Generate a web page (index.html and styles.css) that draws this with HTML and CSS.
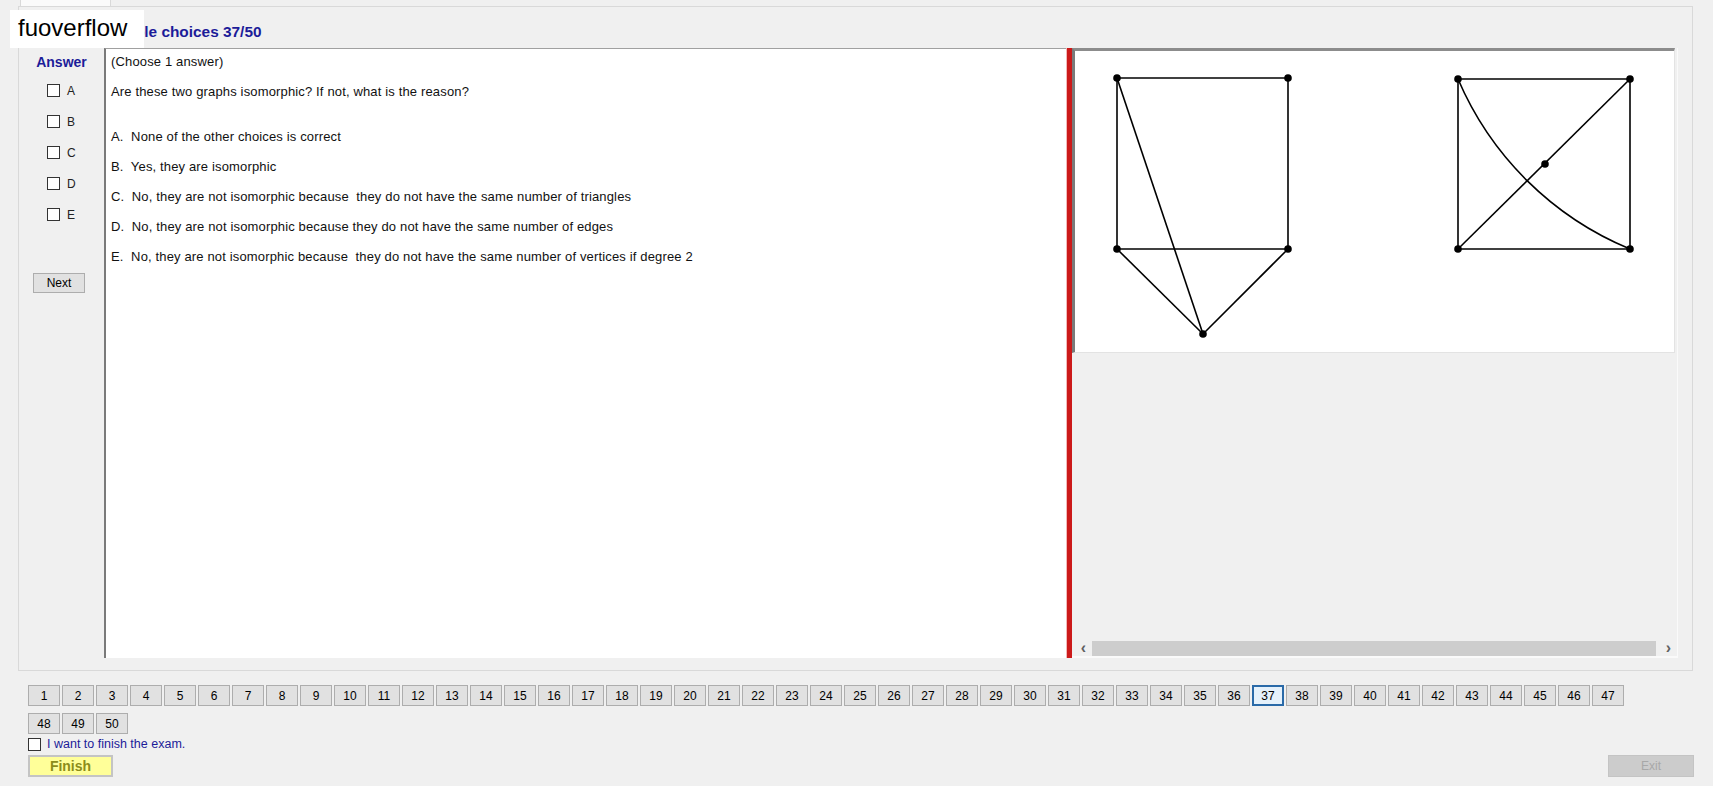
FILE: index.html
```html
<!DOCTYPE html>
<html lang="en">
<head>
    <meta charset="UTF-8">
    <title>Exam</title>
    <link rel="stylesheet" href="styles.css">
</head>
<body>
    <div class="tabs">
        <div class="tab">Question</div>
    </div>
    <div class="tabpage">
        <div class="title">Multiple choices 37/50</div>
        <div class="main">
            <div class="answers">
                <div class="answer-label">Answer</div>
                <label class="opt"><span class="box"></span>A</label>
                <label class="opt"><span class="box"></span>B</label>
                <label class="opt"><span class="box"></span>C</label>
                <label class="opt"><span class="box"></span>D</label>
                <label class="opt"><span class="box"></span>E</label>
                <button class="next">Next</button>
            </div>
            <div class="question">
                <p>(Choose 1 answer)</p>
                <p class="stem">Are these two graphs isomorphic? If not, what is the reason?</p>
                <p>A.&nbsp; None of the other choices is correct</p>
                <p>B.&nbsp; Yes, they are isomorphic</p>
                <p>C.&nbsp; No, they are not isomorphic because&nbsp; they do not have the same number of triangles</p>
                <p>D.&nbsp; No, they are not isomorphic because they do not have the same number of edges</p>
                <p>E.&nbsp; No, they are not isomorphic because&nbsp; they do not have the same number of vertices if degree 2</p>
            </div>
            <div class="splitter"></div>
            <div class="figure-pane">
                <div class="figure">
                    <svg width="599" height="301" viewBox="0 0 599 301">
                        <g stroke="#000" stroke-width="1.6" fill="none">
                            <line x1="42" y1="27" x2="213" y2="27"/>
                            <line x1="213" y1="27" x2="213" y2="198"/>
                            <line x1="42" y1="27" x2="42" y2="198"/>
                            <line x1="42" y1="198" x2="213" y2="198"/>
                            <line x1="42" y1="27" x2="128" y2="283"/>
                            <line x1="42" y1="198" x2="128" y2="283"/>
                            <line x1="213" y1="198" x2="128" y2="283"/>

                            <line x1="383" y1="28" x2="555" y2="28"/>
                            <line x1="555" y1="28" x2="555" y2="198"/>
                            <line x1="383" y1="28" x2="383" y2="198"/>
                            <line x1="383" y1="198" x2="555" y2="198"/>
                            <line x1="383" y1="198" x2="555" y2="28"/>
                            <path d="M383 28 A320 320 0 0 0 555 198"/>
                        </g>
                        <g fill="#000">
                            <circle cx="42" cy="27" r="3.8"/>
                            <circle cx="213" cy="27" r="3.8"/>
                            <circle cx="42" cy="198" r="3.8"/>
                            <circle cx="213" cy="198" r="3.8"/>
                            <circle cx="128" cy="283" r="3.8"/>
                            <circle cx="383" cy="28" r="3.8"/>
                            <circle cx="555" cy="28" r="3.8"/>
                            <circle cx="383" cy="198" r="3.8"/>
                            <circle cx="555" cy="198" r="3.8"/>
                            <circle cx="470" cy="113" r="3.8"/>
                        </g>
                    </svg>
                </div>
                <div class="hscroll">
                    <span class="arrow">&#8249;</span>
                    <span class="thumb"></span>
                    <span class="arrow">&#8250;</span>
                </div>
            </div>
        </div>
    </div>

    <div class="nav" id="nav"></div>

    <label class="finish-check"><span class="box"></span>I want to finish the exam.</label>
    <div class="bottom-row">
        <button class="finish">Finish</button>
        <button class="exit" disabled>Exit</button>
    </div>

    <div class="watermark">fuoverflow</div>

    <script>
        var nav = document.getElementById("nav");
        for (var i = 1; i <= 50; i++) {
            var b = document.createElement("button");
            b.className = i === 37 ? "num current" : "num";
            b.textContent = i;
            nav.appendChild(b);
        }
    </script>
</body>
</html>
```

FILE: styles.css
```css
body {
    margin: 0;
    background-color: #f0f0f0;
    font-family: "Liberation Sans", Arial, sans-serif;
    font-size: 13px;
    color: #000;
    width: 1713px;
    height: 786px;
    overflow: hidden;
    position: relative;
}
.tabs {
    height: 6px;
    padding-left: 20px;
}
.tab {
    width: 89px;
    height: 6px;
    background-color: #fafafa;
    border-left: 1px solid #d9d9d9;
    border-right: 1px solid #d9d9d9;
    overflow: hidden;
    color: transparent;
}
.tabpage {
    box-sizing: border-box;
    margin-left: 18px;
    width: 1675px;
    height: 665px;
    border: 1px solid #d9d9d9;
    background-color: #f0f0f0;
    padding-top: 15px;
}
.title {
    height: 20px;
    line-height: 20px;
    margin: 0 0 6px 80px;
    font-size: 15.4px;
    font-weight: bold;
    color: #1c1c99;
}
.main {
    display: flex;
    height: 610px;
}
.answers {
    width: 85px;
    padding-top: 4px;
    flex-shrink: 0;
}
.answer-label {
    height: 20px;
    line-height: 20px;
    text-align: center;
    font-size: 14px;
    font-weight: bold;
    color: #1c1c99;
}
.opt {
    display: flex;
    align-items: center;
    height: 31px;
    padding-left: 28px;
    font-size: 12px;
    color: #222;
}
.opt:first-of-type {
    margin-top: 3px;
}
.box {
    display: inline-block;
    width: 11px;
    height: 11px;
    border: 1px solid #333;
    background-color: #fff;
    margin-right: 7px;
}
.next {
    display: block;
    margin: 43px 0 0 14px;
    width: 52px;
    height: 20px;
    padding: 0;
    font-family: inherit;
    font-size: 12px;
    background-color: #e1e1e1;
    border: 1px solid #adadad;
    color: #000;
}
.question {
    box-sizing: border-box;
    width: 962px;
    background-color: #fff;
    border-left: 2px solid #7a7a7a;
    border-top: 1px solid #a0a0a0;
    padding: 5px 0 0 5px;
    flex-shrink: 0;
}
.question p {
    margin: 0 0 15px;
    line-height: 15px;
    font-size: 13px;
    letter-spacing: 0.15px;
    white-space: pre;
    color: #111;
}
.question .stem {
    margin-bottom: 30px;
}
.splitter {
    width: 6px;
    background-color: #cc1a1a;
    border-left: 1px solid #f2b8b8;
    box-sizing: border-box;
    flex-shrink: 0;
}
.figure-pane {
    width: 606px;
    display: flex;
    flex-direction: column;
    justify-content: space-between;
    border-right: 1px solid #fafafa;
    border-bottom: 2px solid #fafafa;
    box-sizing: border-box;
}
.figure {
    width: 599px;
    height: 301px;
    background-color: #fff;
    border-left: 3px solid #7a7a7a;
    border-top: 3px solid #8c8c8c;
    border-right: 1px solid #e3e3e3;
    border-bottom: 1px solid #e3e3e3;
}
.figure svg {
    display: block;
}
.hscroll {
    display: flex;
    align-items: center;
    height: 16px;
    margin-left: 3px;
    background-color: #f0f0f0;
}
.arrow {
    width: 17px;
    text-align: center;
    font-size: 16px;
    line-height: 16px;
    color: #606060;
    font-weight: bold;
}
.thumb {
    flex: 1;
    height: 15px;
    margin-right: 4px;
    background-color: #cdcdcd;
}
.nav {
    display: flex;
    flex-wrap: wrap;
    gap: 7px 2px;
    width: 1610px;
    margin: 14px 0 0 28px;
}
.num {
    width: 32px;
    height: 21px;
    padding: 0;
    font-family: inherit;
    font-size: 12px;
    color: #000;
    background-color: #e1e1e1;
    border: 1px solid #adadad;
}
.num.current {
    background-color: #e5f1fb;
    border: 2px solid #2a6aa8;
}
.finish-check {
    display: flex;
    align-items: center;
    height: 14px;
    margin: 3px 0 0 28px;
    color: #1c1c99;
    font-size: 12.5px;
}
.finish-check .box {
    margin-right: 6px;
}
.bottom-row {
    display: flex;
    justify-content: space-between;
    width: 1666px;
    margin: 4px 0 0 28px;
}
.finish {
    width: 85px;
    height: 22px;
    padding: 0;
    font-family: inherit;
    font-size: 14px;
    font-weight: bold;
    color: #8c8c1a;
    background-color: #ffff99;
    border: 2px solid #c4c4c4;
}
.exit {
    width: 86px;
    height: 22px;
    padding: 0;
    font-family: inherit;
    font-size: 12px;
    color: #a8a8a8;
    background-color: #cccccc;
    border: 1px solid #c4c4c4;
}
.watermark {
    position: absolute;
    top: 10px;
    left: 10px;
    width: 126px;
    height: 38px;
    padding-left: 8px;
    background-color: #fff;
    font-size: 24px;
    line-height: 36px;
    color: #000;
}
```
